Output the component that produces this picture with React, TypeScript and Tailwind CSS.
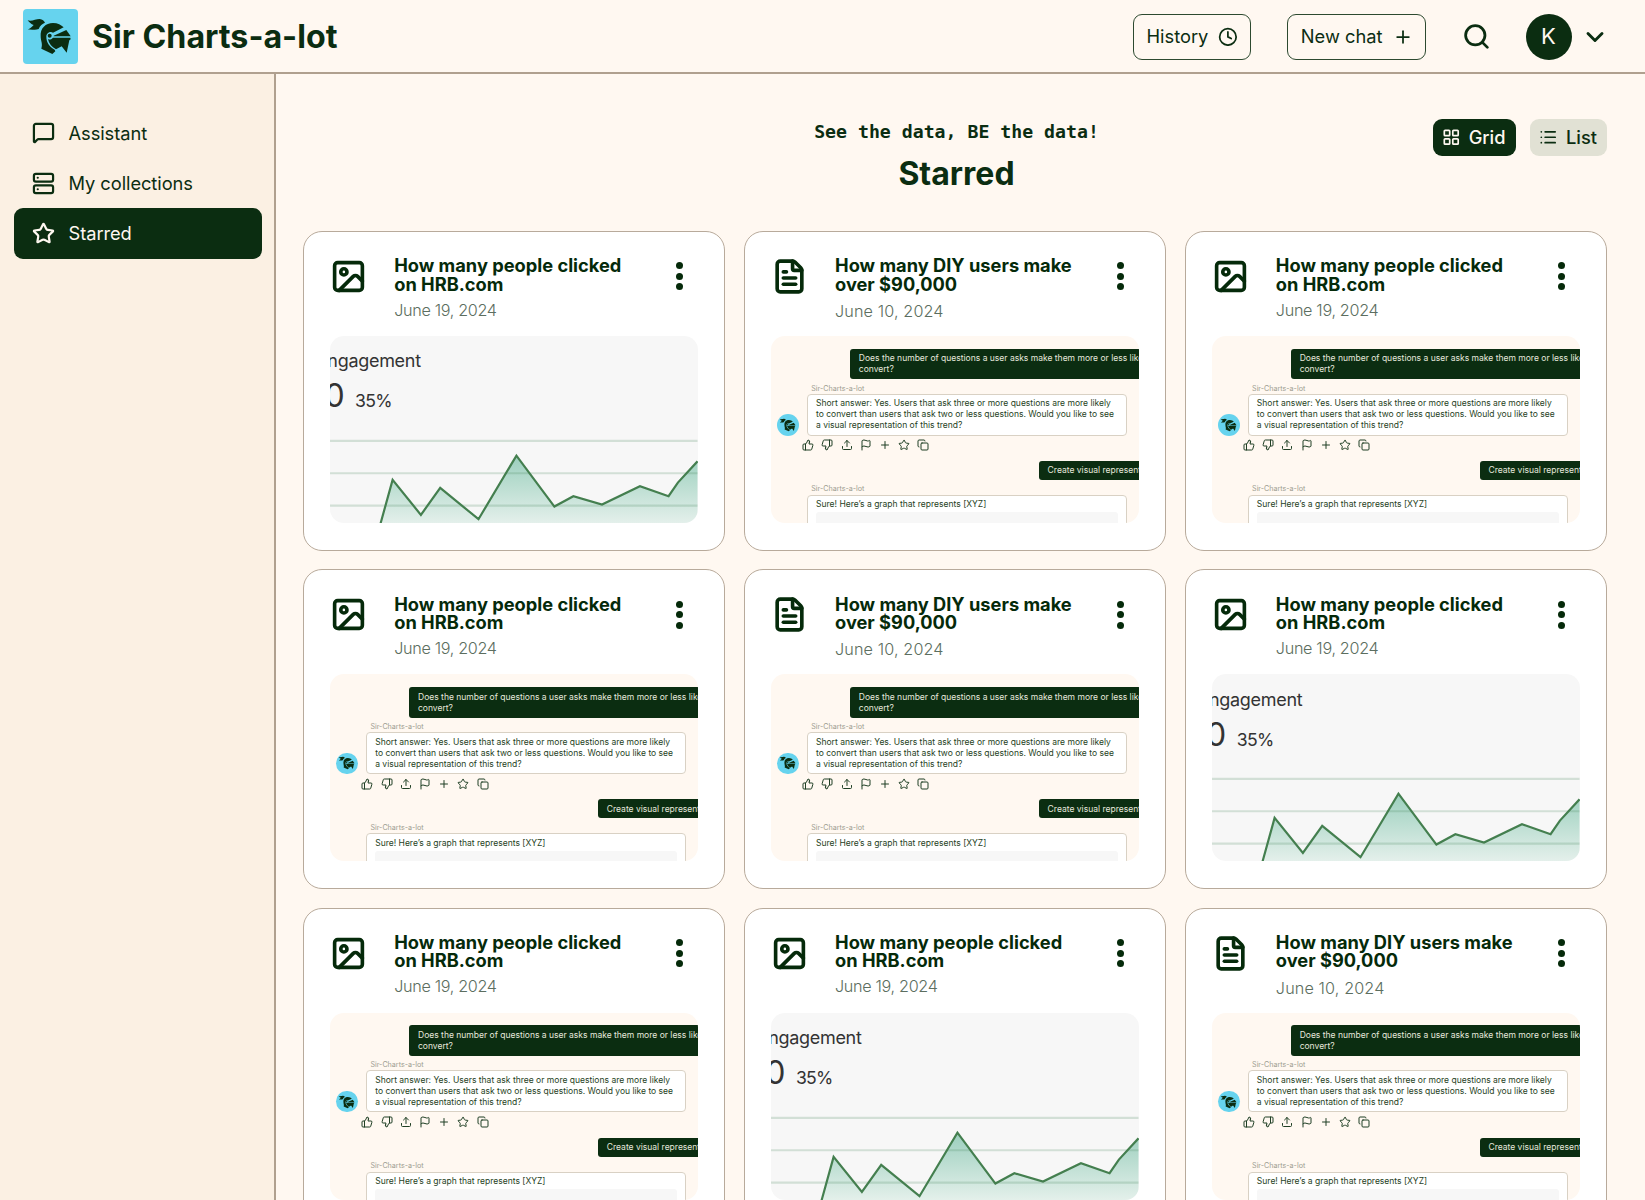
import React from "react";
import {
  ChevronDown,
  Clock,
  Copy,
  FileText,
  Flag,
  Image as ImageIcon,
  LayoutGrid,
  List,
  MessageSquare,
  Plus,
  Search,
  Server,
  Star,
  ThumbsDown,
  ThumbsUp,
  Upload,
} from "lucide-react";

function Knight({ className }: { className?: string }) {
  return (
    <svg viewBox="0 0 165 165" className={className}>
      <g fill="#0b2d11">
        <path d="M14 34C26 38 38 30 50 30C58 31 64 36 66 41C58 44 51 50 47 60C36 65 26 60 14 62C21 59 26 54 32 48C24 46 19 40 14 34Z" />
        <path d="M53 82C51 58 68 42 90 42C104 42 115 48 122 55L90 71C82 66 70 72 70 83C70 100 79 113 95 122L97 127L88 135L55 119C60 104 53 96 53 82Z" />
        <path d="M92 80L130 63L143 81.500L92 82Z" />
        <path d="M75 91C80 92 86 91 90 86L142 86L143 91L139 94L131 131L116 112L99 121C86 114 78 104 75 91Z" />
        <circle cx="80" cy="80" r="6" />
      </g>
    </svg>
  );
}

function NavItem({ icon: Icon, label, active }: { icon: any; label: string; active?: boolean }) {
  return (
    <div
      className={`flex h-[50.3px] items-center rounded-[9px] pl-[18px] text-[18.28px] ${
        active ? "bg-[#0b2d11] text-[#fff8f1]" : "text-[#0b2d11]"
      }`}
    >
      <Icon size={23} strokeWidth={2.3} />
      <span className="ml-[14px] pt-px tracking-[-0.05px]">{label}</span>
    </div>
  );
}

const chartLine =
  "M152 562L188 432L273 537L331 456L446 550L560 359L674 512L731 481L817 506L931 451L1017 481L1045 440L1104 376";

function ChartPreview() {
  return (
    <div className="flex h-[187.3px] flex-col overflow-hidden rounded-[14px] bg-[#f7f7f7] text-[#333333]">
      <div className="mt-[13.6px] ml-[-13.6px] h-[23px] text-[18px] leading-[23px] tracking-[-0.3px] whitespace-nowrap">
        Engagement
      </div>
      <div className="mt-[5px] ml-[-6px] flex h-[37px] items-baseline leading-[38px] whitespace-nowrap">
        <span className="text-[32px]">0</span>
        <span className="ml-[10.5px] text-[17.6px] tracking-[-0.7px]">35%</span>
      </div>
      <svg viewBox="0 240 1104 322" className="mt-auto block w-full shrink-0">
        <defs>
          <linearGradient id="area" x1="0" y1="359" x2="0" y2="562" gradientUnits="userSpaceOnUse">
            <stop offset="0" stopColor="#9bcfbd" />
            <stop offset="1" stopColor="#e4f0eb" />
          </linearGradient>
        </defs>
        <path d={chartLine + "V562Z"} fill="url(#area)" />
        <path d="M0 315H1104M0 412H1104M0 509H1104" stroke="#3f8355" strokeOpacity="0.2" strokeWidth="6.6" />
        <path d={chartLine} fill="none" stroke="#447f4f" strokeWidth="6.6" />
      </svg>
    </div>
  );
}

const actions = [ThumbsUp, ThumbsDown, Upload, Flag, Plus, Star, Copy];

function ChatPreview() {
  return (
    <div className="flex h-[187.3px] flex-col overflow-hidden rounded-[14px] bg-[#fff8f1] text-[8.53px] leading-[11.1px] whitespace-nowrap text-[#1f3f24]">
      <div className="mt-[12.8px] ml-[79px] h-[30.6px] shrink-0 rounded-l-[3px] bg-[#0b2d11] pt-[4.6px] pl-[8.6px] text-[#e6e8dd]">
        <div>Does the number of questions a user asks make them more or less likely to</div>
        <div>convert?</div>
      </div>
      <div className="mt-[3.5px] ml-[40px] text-[7.15px] leading-[11px] text-[#9c9c90]">Sir-Charts-a-lot</div>
      <div className="flex shrink-0 items-end pl-[6px]">
        <span className="mr-[8.5px] flex size-[21.5px] items-center justify-center rounded-full bg-[#66d3ee]">
          <Knight className="size-[20px]" />
        </span>
        <div className="h-[42px] w-[319.5px] rounded-[4px] border border-[#d9d1c4] bg-white pt-[3.6px] pl-[7.8px]">
          <div>Short answer: Yes. Users that ask three or more questions are more likely</div>
          <div>to convert than users that ask two or less questions. Would you like to see</div>
          <div>a visual representation of this trend?</div>
        </div>
      </div>
      <div className="mt-[3.5px] ml-[31px] flex gap-[7.2px]">
        {actions.map((Icon, i) => (
          <Icon key={i} size={12} strokeWidth={2} />
        ))}
      </div>
      <div className="mt-[9.8px] ml-[267.8px] h-[19px] shrink-0 rounded-l-[3px] bg-[#0b2d11] pt-[4.2px] pl-[8.6px] text-[#e6e8dd]">
        Create visual representation
      </div>
      <div className="mt-[4.3px] ml-[40px] text-[7.15px] leading-[10.5px] text-[#9c9c90]">Sir-Charts-a-lot</div>
      <div className="ml-[36px] h-[42px] w-[319.5px] shrink-0 rounded-[4px] border border-[#d9d1c4] bg-white px-[7.8px] pt-[3.6px]">
        <div>Sure! Here’s a graph that represents [XYZ]</div>
        <div className="mt-[1.8px] h-[40px] rounded-[3px] bg-[#f7f7f7]" />
      </div>
    </div>
  );
}

function Card({ doc, chart }: { doc?: boolean; chart?: boolean }) {
  return (
    <div className="h-[320px] rounded-[19px] border border-[#b8aa9b] bg-white px-[26.4px] pt-[24.3px]">
      <div className="flex h-[79.5px] items-start text-[#052a0a]">
        {doc ? (
          <FileText size={37} strokeWidth={2.35} className="mt-[1.5px]" />
        ) : (
          <ImageIcon size={37} strokeWidth={2.35} className="mt-[1.5px]" />
        )}
        <div className="ml-[26.8px]">
          <div className="text-[18.25px] leading-[18.28px] font-bold whitespace-nowrap">
            {doc ? "How many DIY users make" : "How many people clicked"}
            <br />
            {doc ? "over $90,000" : "on HRB.com"}
          </div>
          <div
            className={`text-[16.2px] leading-[20px] font-light text-[#5c6e60] ${
              doc ? "mt-[8px] tracking-[0.12px]" : "mt-[6.8px] tracking-[-0.33px]"
            }`}
          >
            {doc ? "June 10, 2024" : "June 19, 2024"}
          </div>
        </div>
        <div className="mt-[6px] mr-[14.8px] ml-auto flex flex-col gap-[3.6px]">
          <span className="size-[7px] rounded-full bg-[#052a0a]" />
          <span className="size-[7px] rounded-full bg-[#052a0a]" />
          <span className="size-[7px] rounded-full bg-[#052a0a]" />
        </div>
      </div>
      {chart ? <ChartPreview /> : <ChatPreview />}
    </div>
  );
}

const cards = [
  { chart: true },
  { doc: true },
  {},
  {},
  { doc: true },
  { chart: true },
  {},
  { chart: true },
  { doc: true },
];

export default function App() {
  return (
    <div className="flex h-[1200px] w-[1645px] flex-col overflow-hidden bg-[#fff8f1] font-['Inter',sans-serif] text-[#0b2d11]">
      <header className="flex h-[74px] shrink-0 items-center border-b-2 border-[#b0a08f] pl-[23px]">
        <div className="flex size-[55px] items-center justify-center rounded-[4px] bg-[#66d3ee]">
          <Knight className="size-[55px]" />
        </div>
        <h1 className="ml-[14px] pt-[2px] text-[32.2px] font-bold whitespace-nowrap">Sir Charts-a-lot</h1>
        <div className="mr-[36px] ml-auto flex items-center pt-[1px] text-[18.28px]">
          <button className="flex h-[46px] w-[118px] items-center justify-between rounded-[9px] border border-[#2d4a30] pr-[12px] pl-[13px]">
            <span className="pt-px">History</span>
            <Clock size={19.8} strokeWidth={2.1} />
          </button>
          <button className="ml-[36.3px] flex h-[46px] w-[138.7px] items-center justify-between rounded-[9px] border border-[#2d4a30] pr-[12px] pl-[13px]">
            <span className="pt-px">New chat</span>
            <Plus size={20} strokeWidth={2.1} />
          </button>
          <Search size={29} strokeWidth={2.3} className="ml-[36px]" />
          <div className="ml-[35px] flex size-[46px] items-center justify-center rounded-full bg-[#0b2d11] text-[22px] text-[#fff8f1]">
            K
          </div>
          <ChevronDown size={28} strokeWidth={2.5} className="ml-[9.5px]" />
        </div>
      </header>
      <div className="flex min-h-0 grow">
        <nav className="w-[276px] shrink-0 border-r-2 border-[#b0a08f] bg-[#fbf0e3] pt-[33.7px] pr-[12.5px] pl-[13.5px]">
          <NavItem icon={MessageSquare} label="Assistant" />
          <NavItem icon={Server} label="My collections" />
          <NavItem icon={Star} label="Starred" active />
        </nav>
        <main className="min-w-0 grow pr-[38px] pl-[27px]">
          <div className="grid h-[157px] grid-cols-[1fr_auto_1fr] items-start">
            <div />
            <div className="flex flex-col items-center pt-[46px] pl-[3px]">
              <p className="font-['DejaVu_Sans_Mono',monospace] text-[18.2px] leading-[24px] font-bold">
                See the data, BE the data!
              </p>
              <h2 className="mt-[10px] text-[32px] leading-[40px] font-bold">Starred</h2>
            </div>
            <div className="flex justify-end gap-[14px] pt-[45px] text-[18.28px] font-medium">
              <button className="flex h-[36.5px] w-[83px] items-center justify-between rounded-[9px] bg-[#0b2d11] pr-[10px] pl-[9px] text-[#fff8f1]">
                <LayoutGrid size={18.5} strokeWidth={2.2} />
                Grid
              </button>
              <button className="flex h-[36.5px] w-[77.5px] items-center justify-between rounded-[9px] bg-[#e1e1d4] pr-[10px] pl-[9px]">
                <List size={18.5} strokeWidth={2.2} />
                List
              </button>
            </div>
          </div>
          <div className="grid grid-cols-3 gap-x-[18.5px] gap-y-[18.4px]">
            {cards.map((c, i) => (
              <Card key={i} {...c} />
            ))}
          </div>
        </main>
      </div>
    </div>
  );
}
